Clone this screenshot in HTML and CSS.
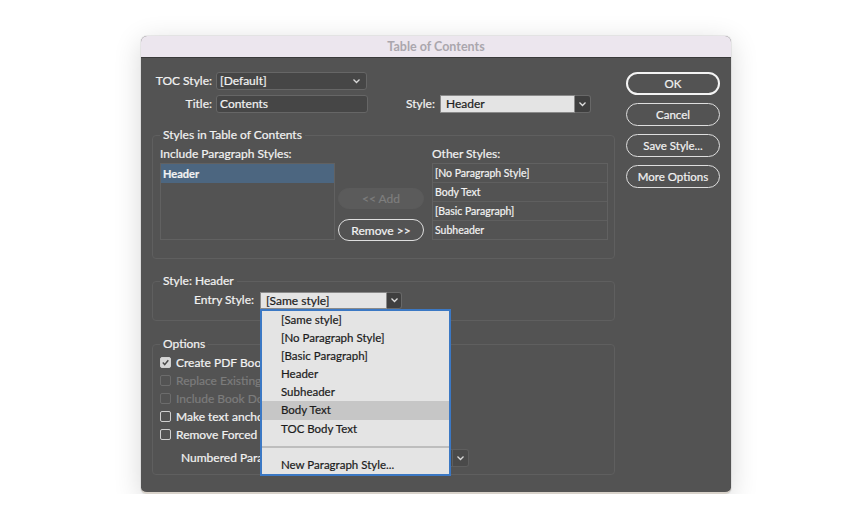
FILE: index.html
```html
<!DOCTYPE html>
<html lang="en">
<head>
    <meta charset="UTF-8">
    <meta name="viewport" content="width=device-width, initial-scale=1.0">
    <title>Table of Contents</title>
    <link rel="stylesheet" href="styles.css">
</head>
<body>
    <div class="window">
        <div class="titlebar">Table of Contents</div>
        <div class="dialog">
            <div class="main">
                <div class="row">
                    <span class="lbl lbl-top">TOC Style:</span>
                    <div class="select dark toc-select">
                        <span>[Default]</span>
                        <svg class="chev" width="9" height="6" viewBox="0 0 9 6"><polyline points="1.5,1.5 4.5,4.5 7.5,1.5" fill="none" stroke="#d8d8d8" stroke-width="1.3"/></svg>
                    </div>
                </div>
                <div class="row row-title">
                    <span class="lbl lbl-top">Title:</span>
                    <div class="field">Contents</div>
                    <span class="lbl style-lbl">Style:</span>
                    <div class="combo style-combo">
                        <span class="combo-text">Header</span>
                        <span class="combo-btn"><svg width="9" height="6" viewBox="0 0 9 6"><polyline points="1.5,1.5 4.5,4.5 7.5,1.5" fill="none" stroke="#e0e0e0" stroke-width="1.3"/></svg></span>
                    </div>
                </div>

                <fieldset class="group g-styles">
                    <legend>Styles in Table of Contents</legend>
                    <div class="cols">
                        <div class="col col-left">
                            <div class="col-title">Include Paragraph Styles:</div>
                            <div class="list">
                                <div class="item selected">Header</div>
                            </div>
                        </div>
                        <div class="mid">
                            <button class="pill disabled">&lt;&lt; Add</button>
                            <button class="pill">Remove &gt;&gt;</button>
                        </div>
                        <div class="col col-right">
                            <div class="col-title">Other Styles:</div>
                            <div class="list lined">
                                <div class="item">[No Paragraph Style]</div>
                                <div class="item">Body Text</div>
                                <div class="item">[Basic Paragraph]</div>
                                <div class="item">Subheader</div>
                            </div>
                        </div>
                    </div>
                </fieldset>

                <fieldset class="group g-entry">
                    <legend>Style: Header</legend>
                    <div class="row">
                        <span class="lbl lbl-entry">Entry Style:</span>
                        <div class="combo entry-combo">
                            <span class="combo-text">[Same style]</span>
                            <span class="combo-btn"><svg width="9" height="6" viewBox="0 0 9 6"><polyline points="1.5,1.5 4.5,4.5 7.5,1.5" fill="none" stroke="#e0e0e0" stroke-width="1.3"/></svg></span>
                            <div class="menu">
                                <div class="menu-item">[Same style]</div>
                                <div class="menu-item">[No Paragraph Style]</div>
                                <div class="menu-item">[Basic Paragraph]</div>
                                <div class="menu-item">Header</div>
                                <div class="menu-item">Subheader</div>
                                <div class="menu-item hover">Body Text</div>
                                <div class="menu-item">TOC Body Text</div>
                                <div class="menu-sep"></div>
                                <div class="menu-item">New Paragraph Style...</div>
                            </div>
                        </div>
                    </div>
                </fieldset>

                <fieldset class="group g-options">
                    <legend>Options</legend>
                    <div class="check">
                        <span class="box checked"><svg width="9" height="9" viewBox="0 0 9 9"><polyline points="1.8,4.6 3.7,6.6 7.3,2.2" fill="none" stroke="#4a4a4a" stroke-width="1.5"/></svg></span>
                        Create PDF Bookmarks
                    </div>
                    <div class="check off">
                        <span class="box"></span>
                        Replace Existing Table of Contents
                    </div>
                    <div class="check off">
                        <span class="box"></span>
                        Include Book Documents
                    </div>
                    <div class="check">
                        <span class="box"></span>
                        Make text anchor in source paragraph
                    </div>
                    <div class="check">
                        <span class="box"></span>
                        Remove Forced Line Break
                    </div>
                    <div class="row row-num">
                        <span class="lbl lbl-num">Numbered Paragraphs:</span>
                        <div class="combo dark num-combo">
                            <span class="combo-text">Include Full Paragraph</span>
                            <span class="combo-btn"><svg width="9" height="6" viewBox="0 0 9 6"><polyline points="1.5,1.5 4.5,4.5 7.5,1.5" fill="none" stroke="#d8d8d8" stroke-width="1.3"/></svg></span>
                        </div>
                    </div>
                </fieldset>
            </div>

            <div class="buttons">
                <button class="pill big default">OK</button>
                <button class="pill big">Cancel</button>
                <button class="pill big">Save Style...</button>
                <button class="pill big">More Options</button>
            </div>
        </div>
    </div>
</body>
</html>
```

FILE: styles.css
```css
body {
    margin: 0;
    background-color: #fff;
    font-family: Lato, "Open Sans", sans-serif;
    font-size: 12px;
    color: #f2f2f2;
    -webkit-text-stroke: 0.2px currentColor;
}
.window {
    margin: 36px 0 0 141px;
    width: 590px;
    height: 458px;
    border-radius: 6px;
    overflow: hidden;
    background-color: #535353;
    border-bottom: 2px solid #d8d2ca;
    box-sizing: border-box;
    box-shadow: 0 6px 28px rgba(0, 0, 0, 0.16), 0 0 0 1px rgba(0, 0, 0, 0.06);
}
.titlebar {
    height: 22px;
    line-height: 21px;
    background-color: #ece6ee;
    border-bottom: 1px solid #3a3a3a;
    box-sizing: border-box;
    text-align: center;
    font-weight: bold;
    font-size: 12.5px;
    color: #aaa6ad;
    -webkit-text-stroke: 0;
}
.dialog {
    display: flex;
    padding: 14px 0 0 11px;
}
.main {
    width: 463px;
}
.row {
    display: flex;
    align-items: center;
    height: 18px;
}
.row-title {
    margin-top: 5px;
}
.lbl {
    line-height: 14px;
    white-space: nowrap;
}
.lbl-top {
    width: 60px;
    margin-right: 4px;
    text-align: right;
}
.style-lbl {
    margin-left: 38px;
    margin-right: 5px;
}
.select, .field {
    height: 18px;
    box-sizing: border-box;
    border: 1px solid #666;
    border-radius: 3px;
    background-color: #464646;
    padding-left: 3px;
    line-height: 16px;
}
.select {
    display: flex;
    align-items: center;
    justify-content: space-between;
    padding-right: 5px;
}
.toc-select {
    width: 151px;
}
.field {
    width: 152px;
}
.combo {
    display: flex;
    height: 18px;
    position: relative;
}
.combo-text {
    flex: 1;
    background-color: #e4e4e4;
    color: #1c1c1c;
    border: 1px solid #8a8a8a;
    padding-left: 5px;
    line-height: 16px;
    white-space: nowrap;
    overflow: hidden;
}
.combo-btn {
    width: 15px;
    background-color: #3f3f3f;
    border: 1px solid #686868;
    border-left: none;
    border-radius: 0 3px 3px 0;
    display: flex;
    align-items: center;
    justify-content: center;
}
.style-combo {
    width: 151px;
}
.combo.dark .combo-text {
    background-color: #4a4a4a;
    color: #ececec;
    border-color: #5e5e5e;
}
.combo.dark .combo-btn {
    background-color: #4a4a4a;
    border-color: #5e5e5e;
}

/* grouped boxes */
.group {
    margin: 0;
    border: 1px solid #5f5f5f;
    border-radius: 4px;
    padding: 0 6px 0 7px;
}
.group legend {
    padding: 0 3px;
    line-height: 14px;
}
.g-styles {
    margin-top: 15px;
    padding-top: 5px;
    padding-bottom: 17px;
}
.cols {
    display: flex;
}
.col-left {
    width: 175px;
}
.col-right {
    width: 176px;
    margin-left: 8px;
}
.col-title {
    line-height: 14px;
    margin-bottom: 2px;
}
.list {
    height: 77px;
    border: 1px solid #616161;
    box-sizing: border-box;
}
.item {
    height: 19px;
    line-height: 19px;
    padding-left: 2px;
    font-size: 10.5px;
    box-sizing: border-box;
}
.item.selected {
    background-color: #4c6680;
    font-weight: bold;
    font-size: 11px;
}
.lined .item {
    border-bottom: 1px solid #5f5f5f;
}
.lined .item:last-child {
    border-bottom: none;
}
.mid {
    display: flex;
    flex-direction: column;
    gap: 10px;
    width: 86px;
    margin-left: 3px;
    padding-top: 41px;
}
.pill {
    font-family: inherit;
    font-size: 12px;
    color: #f2f2f2;
    background: transparent;
    border: 1.5px solid #dedede;
    border-radius: 12px;
    height: 22px;
    padding: 0;
    -webkit-text-stroke: 0.2px currentColor;
}
.pill.disabled {
    border-color: #5b5b5b;
    background-color: #5b5b5b;
    color: #7e7e7e;
    height: 21px;
}
.g-entry {
    margin-top: 15px;
    padding-top: 3px;
    padding-bottom: 11px;
}
.lbl-entry {
    width: 94px;
    margin-right: 6px;
    text-align: right;
}
.entry-combo {
    width: 142px;
    height: 17px;
}
.entry-combo .combo-btn {
    width: 14px;
}

/* open popup list */
.menu {
    position: absolute;
    top: 17px;
    left: 0;
    width: 191px;
    height: 167px;
    box-sizing: border-box;
    border: 2px solid #3b78c4;
    background-color: #e4e4e4;
    color: #1c1c1c;
    font-size: 11.5px;
    z-index: 2;
}
.menu-item {
    height: 18.2px;
    line-height: 18px;
    padding-left: 19px;
}
.menu-item.hover {
    background-color: #c6c6c6;
}
.menu-sep {
    height: 2px;
    margin: 8px 0;
    background-color: #bdbdbd;
}
.g-options {
    margin-top: 16px;
    padding-top: 2px;
    padding-bottom: 7px;
}
.check {
    display: flex;
    align-items: center;
    height: 18px;
    white-space: nowrap;
}
.check .box {
    width: 11px;
    height: 11px;
    box-sizing: border-box;
    border: 1px solid #d0d0d0;
    border-radius: 2px;
    margin-right: 5px;
    display: flex;
    align-items: center;
    justify-content: center;
}
.check .box.checked {
    background-color: #d6d6d6;
}
.check.off {
    color: #7c7c7c;
}
.check.off .box {
    border-color: #6c6c6c;
}
.row-num {
    margin-top: 6px;
}
.lbl-num {
    margin-left: 21px;
    width: 120px;
    margin-right: 5px;
}
.num-combo {
    width: 163px;
}
.buttons {
    display: flex;
    flex-direction: column;
    gap: 8px;
    width: 94px;
    margin-left: 11px;
}
.pill.big {
    height: 23px;
    width: 94px;
    font-size: 11.5px;
}
.pill.default {
    border: 2px solid #f4f4f4;
}
```
